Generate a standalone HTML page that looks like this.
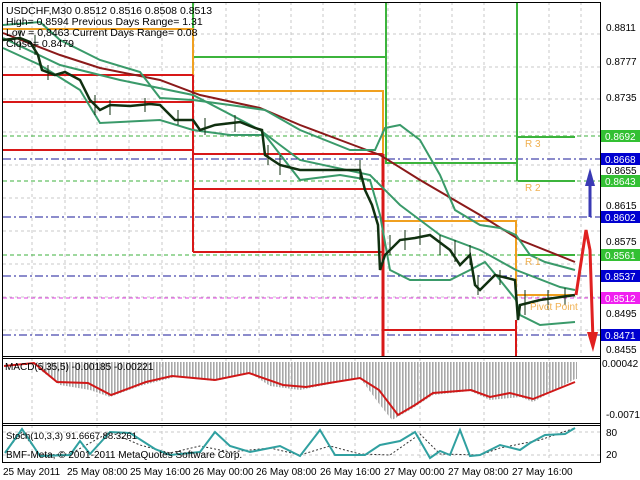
<!DOCTYPE html>
<html><head><meta charset="utf-8"><style>
body{margin:0;background:#fff;width:640px;height:480px;overflow:hidden}
svg{display:block;font-family:"Liberation Sans",sans-serif}
</style></head><body>
<svg width="640" height="480" viewBox="0 0 640 480">
<defs>
<pattern id="hs" width="3" height="4" patternUnits="userSpaceOnUse"><rect width="1.6" height="4" fill="#a8a8a8"/></pattern>
</defs>
<rect width="640" height="480" fill="#fff"/>
<g stroke="#c8c8c8" stroke-dasharray="3,3" stroke-width="1">
<path d="M32 2V356M65 2V356M97 2V356M129 2V356M162 2V356M194 2V356M226 2V356M259 2V356M291 2V356M323 2V356M355 2V356M388 2V356M420 2V356M452 2V356M484 2V356M517 2V356M549 2V356M581 2V356"/>
<path d="M3 34H600M3 67H600M3 99H600M3 132H600M3 165H600M3 198H600M3 231H600M3 264H600M3 297H600M3 330H600"/>
<path d="M32 358V422M97 358V422M162 358V422M226 358V422M291 358V422M355 358V422M420 358V422M484 358V422M549 358V422"/>
<path d="M32 425V461M97 425V461M162 425V461M226 425V461M291 425V461M355 425V461M420 425V461M484 425V461M549 425V461M3 432H600M3 455H600"/>
</g>
<g stroke="#1a1a9a" stroke-width="1" stroke-dasharray="8,3,2,3"><path d="M3 159H600M3 217H600M3 276H600M3 335H600"/></g>
<g stroke="#3cb03c" stroke-width="1" stroke-dasharray="4,3"><path d="M3 136H600M3 181H600M3 255H600"/></g>
<path d="M3 298H600" stroke="#e040e0" stroke-dasharray="4,3"/>
<g stroke="#3cb43c" stroke-width="2" fill="none"><path d="M193 2V57H386M386 2V163H516M517 2V181M518 137H575M518 181H575M518 255H575"/></g>
<g stroke="#f0a020" stroke-width="2" fill="none"><path d="M3 29H193V91H383V221H516V295H575"/></g>
<g stroke="#d81818" stroke-width="2" fill="none"><path d="M3 75H193M3 102H193M3 150H193M193 75V252M193 154H383M193 189H383M193 252H383M383 330H516M516 320V356"/><path d="M383 154V356" stroke-width="3"/></g>
<polyline fill="none" stroke="#8b1a1a" stroke-width="2" points="3,33 60,55 100,68 160,80 200,95 260,108 300,125 340,140 380,155 420,180 480,215 520,240 575,262"/>
<g fill="none" stroke="#3a9a6a" stroke-width="2">
<polyline points="3,25 40,22 60,40 100,60 140,72 160,98 193,100 230,105 265,110 300,130 350,150 375,150 385,128 400,125 420,140 440,175 455,210 480,225 500,228 516,235 530,255 545,262 575,270"/>
<polyline points="3,38 60,65 120,80 193,95 260,130 300,160 370,175 380,185 400,205 440,235 480,250 516,270 560,287 575,290"/>
<polyline points="3,48 40,65 80,90 100,123 160,120 193,130 230,135 265,135 300,180 340,175 370,180 380,215 390,270 410,280 450,280 470,270 485,262 500,280 516,300 520,315 540,325 575,322"/>
</g>
<polyline fill="none" stroke="#103010" stroke-width="2.5" points="3,40 20,38 30,42 38,55 42,70 55,75 65,72 80,80 90,100 100,110 110,105 130,106 150,104 160,105 175,120 193,120 200,130 215,125 240,122 255,128 262,130 265,155 280,165 300,170 330,170 360,170 365,190 372,205 378,225 380,270 385,255 400,240 415,238 430,235 450,250 460,265 470,255 475,285 480,290 495,275 515,280 518,320 520,305 540,300 575,295"/>
<g stroke="#103010" stroke-width="1"><path d="M20 30V50M35 35V55M48 65V80M95 95V115M110 100V115M145 98V112M178 110V125M205 118V135M235 115V132M268 145V165M280 155V175M360 160V180M390 235V255M405 230V250M420 228V245M440 235V255M455 240V262M470 245V265M478 275V295M500 270V285M525 290V315M548 290V310M565 288V305"/></g>
<path d="M590 217L590 176" stroke="#3a3ab4" stroke-width="3"/><path d="M585 186L590 168L595 186Z" fill="#3a3ab4"/>
<polyline points="576,295 586,230 590,250 593,340" fill="none" stroke="#e02020" stroke-width="3"/><path d="M587 332L593 352L598 332Z" fill="#e02020"/>
<g fill="#f0b050" font-size="10"><text x="525" y="147">R 3</text><text x="525" y="191">R 2</text><text x="525" y="265">R 1</text><text x="530" y="310">Pivot Point</text></g>
<g fill="#000" font-size="10.5"><text x="6" y="14">USDCHF,M30  0.8512 0.8516 0.8508 0.8513</text><text x="6" y="25">High= 0,8594    Previous Days Range= 1.31</text><text x="6" y="36">Low = 0,8463    Current Days Range= 0.08</text><text x="6" y="47">Close= 0.8479</text></g>
<!-- MACD -->
<path d="M4 362 L40 362 40 370 60 385 90 390 110 397 140 386 175 377 215 381 250 373 270 386 300 390 330 384 360 378 380 405 392 420 410 410 433 395 470 391 490 400 520 397 533 402 575 379 577 379 577 362 Z" fill="url(#hs)"/>
<polyline fill="none" stroke="#d01818" stroke-width="2" points="4,366 34,363 57,382 88,383 111,395 146,382 172,376 215,380 249,373 283,385 306,387 329,383 360,378 379,390 398,415 415,405 433,393 471,390 490,397 510,393 533,399 575,382"/>
<text x="5" y="370" font-size="10">MACD(5,35,5) -0.00185 -0.00221</text>
<polyline fill="none" stroke="#333" stroke-width="1" stroke-dasharray="2,2" points="5,452 22,432 40,455 70,454 110,432 140,445 170,453 200,446 230,452 270,448 300,455 330,446 360,454 390,455 420,434 440,454 480,455 500,448 540,440 575,428"/>
<polyline fill="none" stroke="#30a0a0" stroke-width="2" points="5,453 22,429 40,456 70,455 80,441 90,454 110,432 130,433 155,449 170,455 200,452 215,432 230,446 250,452 280,446 300,456 320,430 335,455 365,455 380,445 400,441 415,432 430,458 440,451 450,455 460,430 470,456 480,455 500,445 520,450 530,443 545,435 565,434 575,428"/>
<text x="6" y="439" font-size="9.5">Stoch(10,3,3) 91.6667 88.3261</text>
<text x="6" y="458" font-size="10">BMF-Meta, © 2001-2011 MetaQuotes Software Corp.</text>
<g stroke="#000" fill="none" stroke-width="1"><path d="M2.5 2.5H600.5V462.5M2.5 2.5V462.5H600.5M2.5 356.5H600.5M2.5 358.5H600.5M2.5 423.5H600.5M2.5 425.5H600.5"/></g>
<g font-size="10" fill="#000"><text x="606" y="31">0.8811</text><text x="606" y="65">0.8777</text><text x="606" y="101">0.8735</text><text x="606" y="174">0.8655</text><text x="606" y="209">0.8615</text><text x="606" y="245">0.8575</text><text x="606" y="317">0.8495</text><text x="606" y="353">0.8455</text><text x="602" y="367">0.00042</text><text x="606" y="418">-0.0071</text><text x="606" y="436">80</text><text x="606" y="458">20</text></g>
<g font-size="10">
<rect x="601" y="130" width="39" height="12" fill="#33c033"/><text x="605" y="140" fill="#fff">0.8692</text>
<rect x="601" y="153" width="39" height="12" fill="#0000d0"/><text x="605" y="163" fill="#fff">0.8668</text>
<rect x="601" y="175" width="39" height="12" fill="#33c033"/><text x="605" y="185" fill="#fff">0.8643</text>
<rect x="601" y="211" width="39" height="12" fill="#0000d0"/><text x="605" y="221" fill="#fff">0.8602</text>
<rect x="601" y="249" width="39" height="12" fill="#33c033"/><text x="605" y="259" fill="#fff">0.8561</text>
<rect x="601" y="270" width="39" height="12" fill="#0000d0"/><text x="605" y="280" fill="#fff">0.8537</text>
<rect x="601" y="292" width="39" height="12" fill="#f020f0"/><text x="605" y="302" fill="#fff">0.8512</text>
<rect x="601" y="329" width="39" height="12" fill="#0000d0"/><text x="605" y="339" fill="#fff">0.8471</text>
</g>
<g font-size="10" fill="#000"><text x="3" y="475">25 May 2011</text><text x="67" y="475">25 May 08:00</text><text x="130" y="475">25 May 16:00</text><text x="193" y="475">26 May 00:00</text><text x="256" y="475">26 May 08:00</text><text x="320" y="475">26 May 16:00</text><text x="384" y="475">27 May 00:00</text><text x="448" y="475">27 May 08:00</text><text x="512" y="475">27 May 16:00</text></g>
</svg>
</body></html>
